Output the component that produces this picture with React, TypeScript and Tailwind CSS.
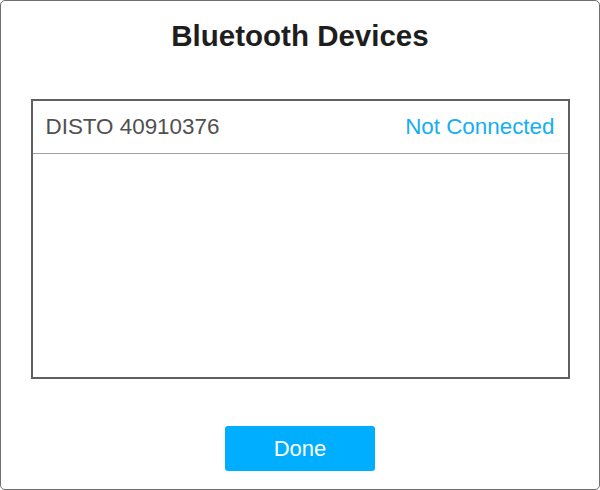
import React from "react";

export default function App() {
  return (
    <div
      className="w-[600px] h-[490px] bg-white border border-[#707070] rounded-[5px] flex flex-col items-center"
      style={{ fontFamily: '"Liberation Sans", Arial, sans-serif' }}
    >
      <h1 className="mt-[16px] text-[29.5px] leading-[38px] font-bold text-[#1e1e1e]">Bluetooth Devices</h1>
      <div className="mt-[44px] w-[539px] h-[280px] border-2 border-[#606060] flex flex-col">
        <div className="h-[53px] border-b border-[#a0a0a0] flex items-center justify-between pl-[13px] pr-[13px]">
          <span className="text-[22.4px] text-[#505050]">DISTO 40910376</span>
          <span className="text-[22.4px] text-[#16aef0]">Not Connected</span>
        </div>
      </div>
      <button className="mt-[47px] w-[150px] h-[45px] bg-[#00aeff] rounded-[3px] text-white text-[22px]">
        Done
      </button>
    </div>
  );
}
